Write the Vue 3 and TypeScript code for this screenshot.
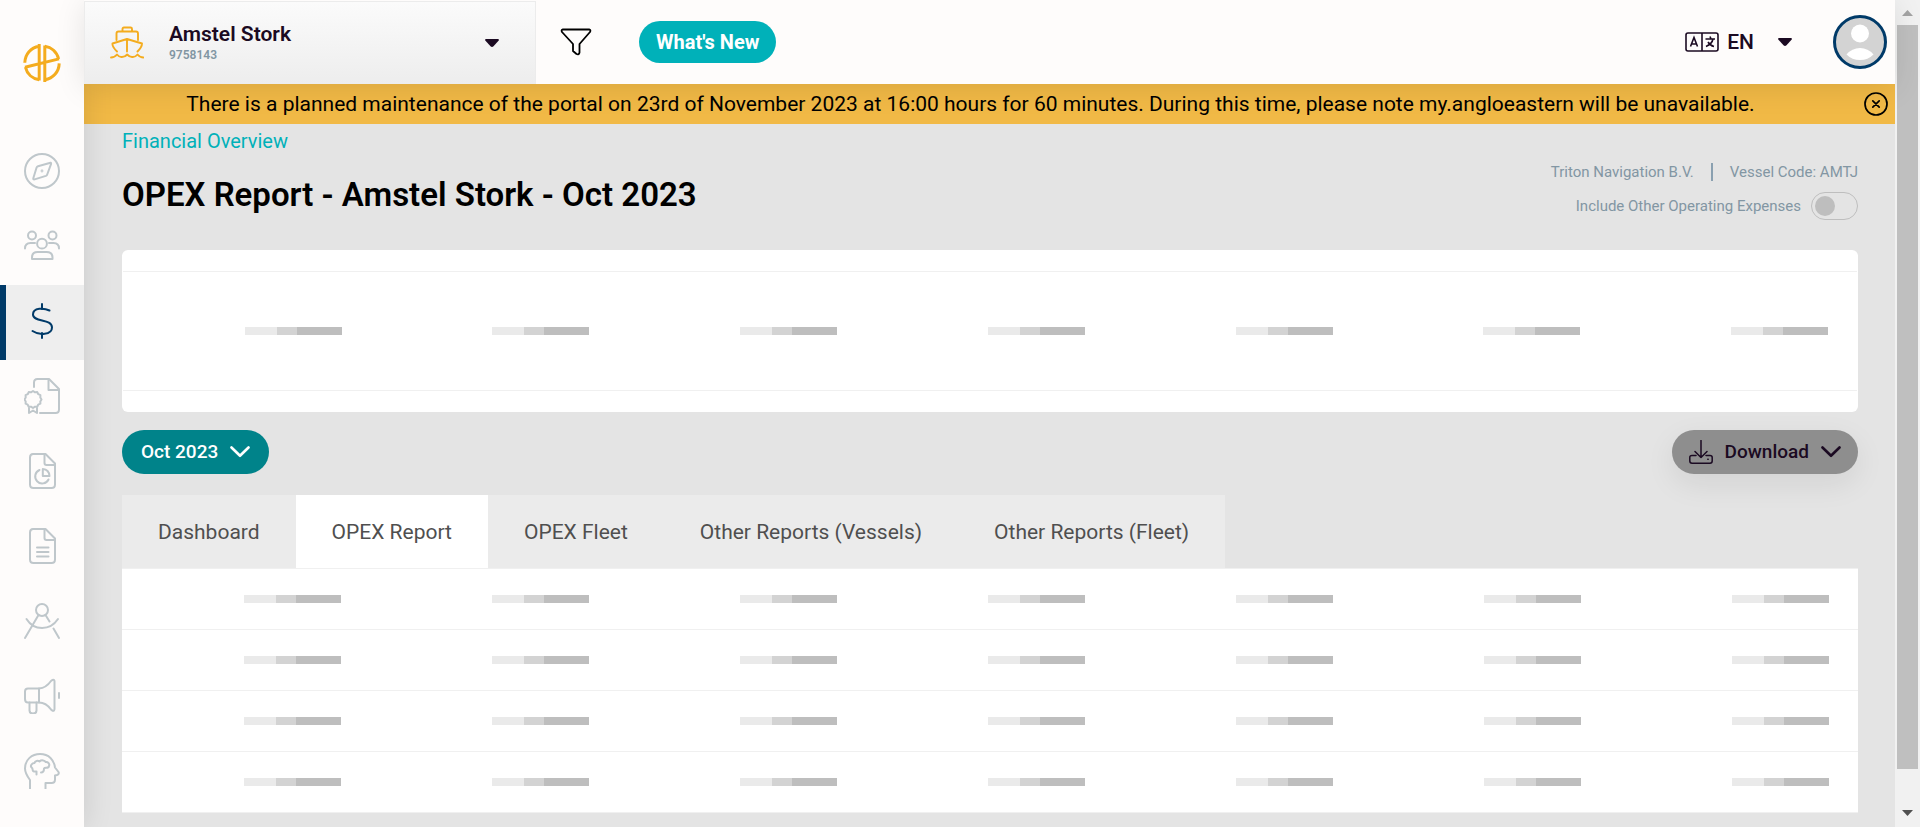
<script setup lang="ts">
import { ref } from 'vue'

interface NavItem {
  label: string
  shapes: string[]
}

// Each shape is a stroked path in a 36 by 36 box
const navItems: NavItem[] = [
  {
    label: 'Explore',
    shapes: [
      'M18 1a17 17 0 1 1 0 34a17 17 0 1 1 0-34z',
      'M26.5 9.8L14 13.2Q13 13.5 12.600 14.500L9.300 25.200Q9 26.800 10.600 26.400L21.900 22.900Q22.900 22.500 23.200 21.500L27 11.200Q27.300 9.600 26.500 9.800z',
      'M18 17.600a.4.4 0 1 1 0 .8a.4.4 0 1 1 0-.8z',
    ],
  },
  {
    label: 'Crew',
    shapes: [
      'M8 3.500a4 4 0 1 1 0 8a4 4 0 1 1 0-8z',
      'M28.500 3.500a4 4 0 1 1 0 8a4 4 0 1 1 0-8z',
      'M18 10.800a4.900 4.900 0 1 1 0 9.800a4.900 4.900 0 1 1 0-9.800z',
      'M1 20.500Q1 15 6.500 15H11M35 20.500Q35 15 29.500 15H25',
      'M8 31V29.500Q8 24 13.500 24H22.500Q28.500 24 28.500 29.500V31z',
    ],
  },
  {
    label: 'Financial',
    shapes: ['M18 1V6M18 30V35', 'M25.500 7.500C20 4.800 9 4.500 9 11.500C9 19.500 28 15.500 28 24.500C28 32 15 32.500 8.500 28'],
  },
  {
    label: 'Certificates',
    shapes: [
      'M10 9V4.500Q10 1 13.500 1H25L35 11V31.500Q35 35 31.500 35H16',
      'M24.500 1.500V12H34.500',
      'M9 13l2 1.300 2.300-.2 1 2.100 2.100 1-.1 2.300 1.200 2-1.200 2 .1 2.200-2.200 1-1 2.100-2.200-.1-2 1.300-2-1.300-2.300.1-1-2.100-2.100-1 .1-2.200-1.200-2 1.200-2-.1-2.300 2.100-1 1-2.100 2.300.2z',
      'M5 30V35L9 32.500L13 35V30',
    ],
  },
  {
    label: 'Reports',
    shapes: [
      'M9 1H21.500L31 10.500V31.500Q31 35 27.500 35H9.500Q6 35 6 31.500V4.500Q6 1 9 1z',
      'M20.500 1.500V10Q20.500 12 22.500 12H30.500',
      'M15.500 17a7 7 0 1 0 9 9.500',
      'M18.800 16Q25 16.500 25.500 23H18.800z',
    ],
  },
  {
    label: 'Documents',
    shapes: [
      'M9 1H21.500L31 10.500V31.500Q31 35 27.500 35H9.500Q6 35 6 31.500V4.500Q6 1 9 1z',
      'M20.500 1.500V10Q20.500 12 22.500 12H30.500',
      'M13 19.500H24.500M13 24H24.500M13 28.500H24.500',
    ],
  },
  {
    label: 'Technical',
    shapes: [
      'M18 1a6 6 0 1 1 0 12a6 6 0 1 1 0-12z',
      'M14.500 12L1 35M21.500 12L25.500 18.500M29.500 25.500L35 35',
      'M2.500 16C10 28 26 28 34 16',
    ],
  },
  {
    label: 'Announcements',
    shapes: [
      'M15 10.500H4Q1 10.500 1 13.500V21Q1 24.500 4 24.500H15z',
      'M15 10.500Q22 10 27 3Q30 .5 30.500 3V31Q30 34.500 27 31.500Q22 24.500 15 24.500',
      'M5.500 24.500V32.500Q5.500 35.500 9 35.500Q12.500 35.500 12.500 32.500V24.500M35 15V20',
    ],
  },
  {
    label: 'Training',
    shapes: [
      'M6 35.500V27C3 23 1 20 1 15.500C1 6.500 8 1 16 1C25 1 30 7 31 14.500L34.500 19Q35.500 21 33 22L31 22.500V26.500Q31 30 27.500 30H21.500V35.500',
      'M12.500 21.500V18.500H10C8 18.500 9 15.500 8 15C5.500 13 8 10 10.500 10C11 7.500 14 7.500 15.500 8.500C17.500 6.500 21 7.500 21.500 9C24 8.500 26 11 25 13C24.500 16 21 14 20 15.500C20 18 19 19.500 17 19.500',
    ],
  },
]

const activeNav = ref('Financial')
const tabs = ['Dashboard', 'OPEX Report', 'OPEX Fleet', 'Other Reports (Vessels)', 'Other Reports (Fleet)']
const activeTab = ref('OPEX Report')
const includeOther = ref(false)
const noticeOpen = ref(true)
</script>

<template>
  <div class="shell">
    <aside class="sidebar">
      <a href="#" class="logo" aria-label="Home">
        <svg width="38" height="38" viewBox="0 0 38 38" fill="none" stroke="#f4ac1e" stroke-width="3">
          <path d="M16 2.200C8 3.500 2 10 1.800 18.800M16.200 0V36.500M2.400 23.200C4 30 9.500 34.800 16.200 35.800M22 35.800C30 34.500 36 28 36.200 19.400M21.800 1.500V38M35.600 15C34 8 28.500 3.200 21.800 2.200M2 23.300L36 14.900" />
        </svg>
      </a>
      <nav aria-label="Main">
        <a
          v-for="item in navItems"
          :key="item.label"
          href="#"
          class="nav-item"
          :class="{ active: item.label === activeNav }"
          :aria-label="item.label"
          @click.prevent="activeNav = item.label"
        >
          <svg width="36" height="36" viewBox="0 0 36 36">
            <path v-for="d in item.shapes" :key="d" :d="d" />
          </svg>
        </a>
      </nav>
    </aside>

    <div class="body">
      <header class="topbar">
        <button type="button" class="vessel">
          <svg class="ship" width="34" height="34" viewBox="0 0 34 34">
            <path d="M12.500 5V3Q12.500 1.500 14 1.500H20.500Q22 1.500 22 3V5M6.500 14V7.500Q6.500 5.500 8.500 5.500H26Q28 5.500 28 7.500V14M7 25.500C4.500 23 2 20 2.500 17.500L17 13L32 17.500C32 20 30 23 27.500 25.500M17 13V25.500M1 31.500Q4.500 31.500 7 28.500Q9.500 31.500 12 31Q15 31 17.200 28.500Q19.500 31 22 31Q25 31.500 27.500 28.500Q30 31.500 33.500 31.500" />
          </svg>
          <span class="vessel-text">
            <span class="vessel-name">Amstel Stork</span>
            <span class="vessel-id">9758143</span>
          </span>
          <svg class="caret" width="14" height="8" viewBox="0 0 14 8"><path d="M1 0H13Q14.500 .5 13.500 1.800L8.500 7.300Q7 8.500 5.500 7.300L.5 1.800Q-.5 .5 1 0z" /></svg>
        </button>
        <button type="button" class="plain filter" aria-label="Filter">
          <svg width="32" height="28" viewBox="0 0 32 28">
            <path d="M2.500 1.500H29.500Q31 2 30 4L19.500 16V24.500Q19 27 16.500 26L13 23V16L2 4Q1 2 2.500 1.500z" />
          </svg>
        </button>
        <button type="button" class="whats-new">What's New</button>
        <button type="button" class="plain language">
          <svg class="lang-icon" width="34" height="20" viewBox="0 0 34 20">
            <path d="M3 1H31Q33 1 33 3V17Q33 19 31 19H3Q1 19 1 17V3Q1 1 3 1zM17 1V19M5.500 14.500L9 5.500L12.500 14.500M6.500 12H11.500M20.500 7H30M25 4.500L26 7M28 7Q27 12 21 14.500M23 10Q25 13.500 29 14.500" />
          </svg>
          <span>EN</span>
          <svg class="caret" width="14" height="8" viewBox="0 0 14 8"><path d="M1 0H13Q14.500 .5 13.500 1.800L8.500 7.300Q7 8.500 5.500 7.300L.5 1.800Q-.5 .5 1 0z" /></svg>
        </button>
        <button type="button" class="plain avatar" aria-label="Account">
          <svg width="54" height="54" viewBox="0 0 54 54">
            <circle cx="27" cy="27" r="25.500" fill="#d3d3d3" stroke="#003a68" stroke-width="3" />
            <circle cx="27" cy="18.500" r="9" fill="#fff" />
            <path d="M13.500 39.500Q19 33 27 33Q35 33 40.500 39.500Q35 45 27 45Q19 45 13.500 39.500z" fill="#fff" />
          </svg>
        </button>
      </header>

      <div v-if="noticeOpen" class="notice" role="status">
        <p>There is a planned maintenance of the portal on 23rd of November 2023 at 16:00 hours for 60 minutes. During this time, please note my.angloeastern will be unavailable.</p>
        <button type="button" class="plain" aria-label="Dismiss" @click="noticeOpen = false">
          <svg width="24" height="24" viewBox="0 0 24 24" fill="none" stroke="#000" stroke-width="1.700" stroke-linecap="round">
            <circle cx="12" cy="12" r="11" />
            <path d="M8.800 8.800L15.200 15.200M15.200 8.800L8.800 15.200" />
          </svg>
        </button>
      </div>

      <main class="content">
        <a href="#" class="crumb">Financial Overview</a>
        <div class="heading">
          <h1>OPEX Report - Amstel Stork - Oct 2023</h1>
          <div class="meta">
            <div class="meta-line">
              <span>Triton Navigation B.V.</span>
              <span class="divider"></span>
              <span>Vessel Code: AMTJ</span>
            </div>
            <label class="meta-toggle">
              <span>Include Other Operating Expenses</span>
              <input v-model="includeOther" type="checkbox" role="switch" />
            </label>
          </div>
        </div>

        <section class="card" aria-label="Summary" aria-busy="true">
          <table class="skeleton tall">
            <tbody>
              <tr>
                <td v-for="c in 7" :key="c"><div class="bar"></div></td>
              </tr>
            </tbody>
          </table>
        </section>

        <div class="actions">
          <button type="button" class="pill month">
            Oct 2023
            <svg width="20" height="12" viewBox="0 0 20 12"><path d="M1.500 1.500L10 9.800L18.500 1.500" /></svg>
          </button>
          <button type="button" class="pill download">
            <svg class="tray" width="24" height="24" viewBox="0 0 24 24">
              <path d="M12 .5V17.500M6 11.500L12 17.500L18 11.500M7 15.500H3Q.8 15.500 .8 17.500V21Q.8 23.200 3 23.200H21Q23.200 23.200 23.200 21V17.500Q23.200 15.500 21 15.500H17M18.800 19.200H19.200" />
            </svg>
            Download
            <svg width="20" height="12" viewBox="0 0 20 12"><path d="M1.500 1.500L10 9.800L18.500 1.500" /></svg>
          </button>
        </div>

        <div class="tabs" role="tablist">
          <button
            v-for="tab in tabs"
            :key="tab"
            type="button"
            role="tab"
            :aria-selected="tab === activeTab"
            :class="{ selected: tab === activeTab }"
            @click="activeTab = tab"
          >{{ tab }}</button>
        </div>
        <table class="skeleton rows" aria-busy="true">
          <tbody>
            <tr v-for="r in 4" :key="r">
              <td v-for="c in 7" :key="c"><div class="bar"></div></td>
            </tr>
          </tbody>
        </table>
      </main>
    </div>

    <div class="scroll" aria-hidden="true">
      <svg width="11" height="6" viewBox="0 0 11 6"><path d="M0 6L5.500 0L11 6z" fill="#a3a3a3" /></svg>
      <div class="thumb"></div>
      <svg class="down" width="11" height="6" viewBox="0 0 11 6"><path d="M0 0L5.500 6L11 0z" fill="#505050" /></svg>
    </div>
  </div>
</template>

<style>
body {
  margin: 0;
}
</style>

<style scoped>
.shell,
.shell * {
  box-sizing: border-box;
}
.shell {
  display: flex;
  min-height: 100vh;
  background: #e4e4e4;
  color: #1b0a22;
  font-family: Roboto, "Liberation Sans", sans-serif;
  font-size: 20px;
  line-height: 24px;
}
button {
  border: 0;
  padding: 0;
  color: inherit;
  font: inherit;
  cursor: pointer;
}
svg {
  display: block;
  flex: none;
}
.plain {
  background: none;
}
.sidebar {
  position: relative;
  z-index: 1;
  flex: none;
  width: 84px;
  background: #fefcfb;
  box-shadow: 0 0 30px rgba(0, 0, 0, 0.12);
}
.logo {
  display: block;
  height: 135px;
  padding: 44px 23px 0;
}
.nav-item {
  display: flex;
  justify-content: center;
  height: 75px;
  padding-top: 18px;
  color: #bfc7cb;
}
.nav-item svg {
  fill: none;
  stroke: currentColor;
  stroke-width: 2;
  stroke-linecap: round;
  stroke-linejoin: round;
}
.nav-item.active {
  padding-right: 6px;
  border-left: 6px solid #003a68;
  background: #eee;
  color: #003a68;
}
.body {
  flex: 1;
  min-width: 0;
}
.topbar {
  position: relative;
  z-index: 2;
  display: flex;
  align-items: center;
  height: 84px;
  padding-right: 8px;
  background: #fefcfb;
  box-shadow: 0 4px 30px rgba(0, 0, 0, 0.1);
}
.vessel {
  display: flex;
  align-items: center;
  width: 452px;
  height: 83px;
  align-self: flex-end;
  padding: 0 36px 0 25px;
  border: 1px solid #ececec;
  border-bottom: 0;
  background: linear-gradient(#fbfbfb, #ededed);
  text-align: left;
}
.ship {
  fill: none;
  stroke: #f4ac1e;
  stroke-width: 1.9;
  stroke-linecap: round;
  stroke-linejoin: round;
}
.vessel-text {
  flex: 1;
  display: flex;
  flex-direction: column;
  padding-left: 25px;
}
.vessel-name {
  font-size: 21px;
  font-weight: 600;
}
.vessel-id {
  color: #8296a3;
  font-size: 12px;
  font-weight: 600;
  line-height: 18px;
}
.caret {
  fill: #1b0a22;
}
.filter {
  margin-left: 24px;
}
.filter svg {
  fill: none;
  stroke: #000;
  stroke-width: 1.8;
  stroke-linejoin: round;
}
.whats-new {
  height: 42px;
  margin-left: 47px;
  padding: 0 17px;
  border-radius: 21px;
  background: #00b1b9;
  color: #fff;
  font-weight: 700;
}
.language {
  display: flex;
  align-items: center;
  gap: 8px;
  margin-left: auto;
  font-size: 21px;
  font-weight: 500;
}
.language .caret {
  margin-left: 16px;
}
.lang-icon {
  fill: none;
  stroke: #1b0a22;
  stroke-width: 1.6;
}
.avatar {
  margin-left: 41px;
}
.notice {
  display: flex;
  align-items: center;
  gap: 7px;
  height: 40px;
  padding-right: 7px;
  background: #f1b946;
  color: #000;
}
.notice p {
  flex: 1;
  margin: 0;
  font-size: 21px;
  text-align: center;
}
.content {
  padding: 4px 37px 14px 38px;
}
.crumb {
  display: block;
  color: #00b1b9;
  line-height: 26px;
  text-decoration: none;
}
.heading {
  display: flex;
  justify-content: space-between;
  height: 96px;
}
h1 {
  margin: 20px 0 0;
  color: #000;
  font-size: 33px;
  font-weight: 600;
  line-height: 42px;
}
.meta {
  display: flex;
  flex-direction: column;
  align-items: flex-end;
  gap: 10px;
  padding-top: 8px;
  color: #8296a3;
  font-size: 15px;
  line-height: 20px;
}
.meta-line,
.meta-toggle {
  display: flex;
  align-items: center;
}
.divider {
  width: 2px;
  height: 18px;
  margin: 0 17px;
  background: #8aa0b0;
}
.meta-toggle {
  gap: 10px;
}
.meta-toggle input {
  appearance: none;
  display: flex;
  align-items: center;
  width: 47px;
  height: 28px;
  margin: 0;
  padding: 0 3px;
  border: 1px solid #bebebe;
  border-radius: 14px;
}
.meta-toggle input::before {
  content: "";
  width: 20px;
  height: 20px;
  border-radius: 50%;
  background: #bebebe;
}
.meta-toggle input:checked {
  justify-content: flex-end;
}
.card {
  padding: 21px 1px;
  border-radius: 6px;
  background: #fff;
}
.skeleton {
  width: 100%;
  border-spacing: 0;
  border-collapse: collapse;
  table-layout: fixed;
  background: #fff;
}
.skeleton td {
  padding: 0 29px 0 0;
  border-top: 1px solid #f0f0f0;
  border-bottom: 1px solid #f0f0f0;
}
.tall td {
  height: 119px;
}
.rows td {
  height: 61px;
}
.bar {
  width: 97px;
  height: 8px;
  margin-left: auto;
  background: linear-gradient(90deg, #eaeaea 32px, #d3d3d3 32px, #d3d3d3 52px, #bebebe 52px);
}
.actions {
  display: flex;
  justify-content: space-between;
  padding: 18px 0 21px;
}
.pill {
  display: flex;
  align-items: center;
  gap: 12px;
  height: 44px;
  padding: 0 19px;
  border-radius: 22px;
  font-size: 19px;
  font-weight: 500;
}
.pill svg {
  fill: none;
  stroke: currentColor;
  stroke-width: 2.6;
  stroke-linecap: round;
  stroke-linejoin: round;
}
.month {
  background: #00838a;
  color: #fff;
}
.download {
  padding: 0 17px;
  background: #8e8e8e;
  box-shadow: 0 10px 30px rgba(0, 0, 0, 0.08);
}
.pill .tray {
  stroke-width: 1.5;
}
.tabs {
  display: flex;
}
.tabs button {
  height: 73px;
  padding: 0 36px;
  background: #ebebeb;
  color: #4f4f4f;
  font-size: 21px;
}
.tabs .selected {
  background: #fff;
}
.scroll {
  flex: none;
  display: flex;
  flex-direction: column;
  align-items: center;
  width: 25px;
  height: 100vh;
  padding: 10px 2px 11px;
  background: #f1f1f1;
}
.thumb {
  flex: none;
  width: 21px;
  height: 90vh;
  margin-top: 9px;
  background: #bfbfbf;
}
.down {
  margin-top: auto;
}
</style>
